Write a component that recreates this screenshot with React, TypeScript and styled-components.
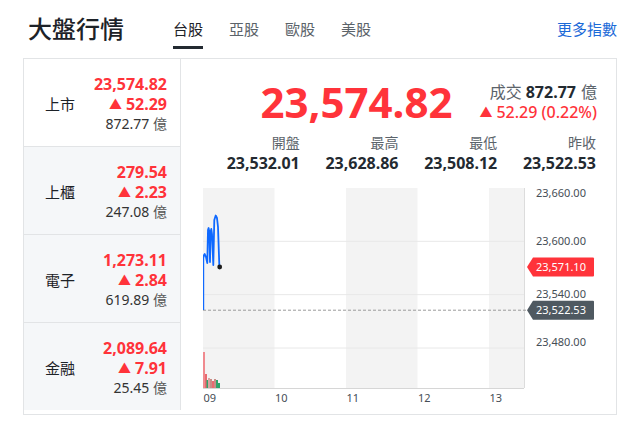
import { FC } from "react";
import styled, { createGlobalStyle } from "styled-components";

const GlobalStyle = createGlobalStyle`
  body {
    margin: 0;
    background: #fff;
    font-family: "Noto Sans", "Noto Sans CJK TC", sans-serif;
    color: #232a31;
  }
`;

const RED = "#ff333a";

interface IndexRow {
  name: string;
  value: string;
  change: string;
  volume: string;
}

const rows: IndexRow[] = [
  { name: "上市", value: "23,574.82", change: "52.29", volume: "872.77" },
  { name: "上櫃", value: "279.54", change: "2.23", volume: "247.08" },
  { name: "電子", value: "1,273.11", change: "2.84", volume: "619.89" },
  { name: "金融", value: "2,089.64", change: "7.91", volume: "25.45" },
];

const stats = [
  { label: "開盤", value: "23,532.01" },
  { label: "最高", value: "23,628.86" },
  { label: "最低", value: "23,508.12" },
  { label: "昨收", value: "23,522.53" },
];

const tabs = ["台股", "亞股", "歐股", "美股"];

// chart geometry (svg coords)
const PLOT_W = 321;
const PLOT_TOP = 8;
const PLOT_BOTTOM = 208;
const HOUR_W = 71.5;
const yOf = (v: number) => PLOT_TOP + (23660 - v) * (160 / 180);

const pricePoints: [number, number][] = [
  [0.3, 130],
  [0.3, 78],
  [1, 75],
  [1.7, 74],
  [3, 77],
  [4.3, 83],
  [5, 50],
  [5.6, 48],
  [6.3, 52],
  [7, 82],
  [7.6, 52],
  [8.3, 49],
  [9, 54],
  [10.3, 85],
  [11.3, 40],
  [12.7, 35.5],
  [14, 38],
  [15, 47],
  [16.3, 85],
  [16.7, 87],
];

const volumeBars = [
  { x: 0, h: 36, c: "#f08a8f" },
  { x: 2, h: 14, c: "#e86a70" },
  { x: 3.5, h: 8, c: "#2fa36b" },
  { x: 5, h: 10, c: "#d9a3a0" },
  { x: 7, h: 9, c: "#c98c86" },
  { x: 9, h: 7, c: "#e86a70" },
  { x: 11, h: 9, c: "#c98c86" },
  { x: 13, h: 8, c: "#2fa36b" },
  { x: 15, h: 5, c: "#2fa36b" },
];

const axisLabels = [
  { text: "23,660.00", y: 13 },
  { text: "23,600.00", y: 61 },
  { text: "23,540.00", y: 114 },
  { text: "23,480.00", y: 162 },
];

const Chart: FC = () => {
  const line = pricePoints.map(([x, y]) => `${x},${y}`).join(" ");
  const lastY = yOf(23571.1);
  const prevY = yOf(23522.53);
  return (
    <ChartSvg width="394" height="232" viewBox="0 0 394 232">
      {[0, 2, 4].map((i) => (
        <rect
          key={i}
          x={i * HOUR_W}
          y={PLOT_TOP}
          width={Math.min(HOUR_W, PLOT_W - i * HOUR_W)}
          height={PLOT_BOTTOM - PLOT_TOP}
          fill="#f3f3f3"
        />
      ))}
      {[23600, 23540, 23480].map((v) => (
        <line key={v} x1="0" x2={PLOT_W} y1={yOf(v)} y2={yOf(v)} stroke="#e8e8e8" />
      ))}
      <line x1={PLOT_W + 0.5} x2={PLOT_W + 0.5} y1={PLOT_TOP} y2={PLOT_BOTTOM} stroke="#dcdcdc" />
      <line x1="0" x2={PLOT_W} y1={PLOT_BOTTOM + 0.5} y2={PLOT_BOTTOM + 0.5} stroke="#d6d6d6" />
      <line
        x1="0"
        x2={PLOT_W + 4}
        y1={prevY}
        y2={prevY}
        stroke="#9a9a9a"
        strokeDasharray="3 2"
      />
      {volumeBars.map((b) => (
        <rect key={b.x} x={b.x} y={PLOT_BOTTOM - b.h} width="2" height={b.h} fill={b.c} />
      ))}
      <polyline points={line} fill="none" stroke="#0f69ff" strokeWidth="1.8" strokeLinejoin="round" />
      <circle cx="16.7" cy={lastY} r="2.4" fill="#1d1d1d" />

      {axisLabels.map((l) => (
        <AxisText key={l.text} x="333" y={l.y + 4}>
          {l.text}
        </AxisText>
      ))}
      {["09", "10", "11", "12", "13"].map((t, i) => (
        <AxisText key={t} x={i * HOUR_W + 0.5} y="222">
          {t}
        </AxisText>
      ))}

      <path
        d={`M324 ${lastY} l6 -9.5 h60 a1 1 0 0 1 1 1 v17 a1 1 0 0 1 -1 1 h-60 z`}
        fill={RED}
      />
      <TagText x="358" y={lastY + 4}>
        23,571.10
      </TagText>
      <path
        d={`M324 ${prevY} l6 -9.5 h60 a1 1 0 0 1 1 1 v17 a1 1 0 0 1 -1 1 h-60 z`}
        fill="#4f5961"
      />
      <TagText x="358" y={prevY + 4}>
        23,522.53
      </TagText>
    </ChartSvg>
  );
};

const App: FC = () => {
  return (
    <>
      <GlobalStyle />
      <Header>
        <Title>大盤行情</Title>
        <Tabs>
          {tabs.map((t, i) => (
            <Tab key={t} $active={i === 0}>
              {t}
            </Tab>
          ))}
        </Tabs>
        <MoreLink>更多指數</MoreLink>
      </Header>
      <Card>
        <SidePanel>
          {rows.map((r, i) => (
            <SideRow key={r.name} $selected={i === 0}>
              <RowName>{r.name}</RowName>
              <RowValues>
                <RowPrice>{r.value}</RowPrice>
                <RowChange>
                  <Arrow>▲</Arrow>
                  {r.change}
                </RowChange>
                <RowVolume>
                  {r.volume} <Unit>億</Unit>
                </RowVolume>
              </RowValues>
            </SideRow>
          ))}
        </SidePanel>
        <MainPanel>
          <PriceRow>
            <BigPrice>23,574.82</BigPrice>
            <PriceMeta>
              <MetaLine>
                <MetaLabel>成交</MetaLabel>
                <strong>872.77</strong>
                <MetaLabel>億</MetaLabel>
              </MetaLine>
              <MetaChange>
                <Arrow>▲</Arrow>
                52.29 (0.22%)
              </MetaChange>
            </PriceMeta>
          </PriceRow>
          <StatsGrid>
            {stats.map((s) => (
              <Stat key={s.label}>
                <StatLabel>{s.label}</StatLabel>
                <StatValue>{s.value}</StatValue>
              </Stat>
            ))}
          </StatsGrid>
          <Chart />
        </MainPanel>
      </Card>
    </>
  );
};

export default App;

const Header = styled.div`
  display: flex;
  align-items: flex-start;
  height: 58px;
  padding: 14px 15px 0 28px;
  box-sizing: border-box;
`;

const Title = styled.h1`
  margin: 0;
  font-size: 24px;
  line-height: 30px;
  font-weight: 500;
  color: #1d2228;
`;

const Tabs = styled.div`
  display: flex;
  gap: 26px;
  margin-left: 49px;
`;

interface TabProps {
  $active?: boolean;
}
const Tab = styled.div<TabProps>`
  font-size: 15px;
  line-height: 22px;
  padding: 4px 0 6px;
  color: ${(p) => (p.$active ? "#1d2228" : "#5b636a")};
  border-bottom: 3px solid ${(p) => (p.$active ? "#232a31" : "transparent")};
`;

const MoreLink = styled.a`
  margin-left: auto;
  font-size: 15px;
  line-height: 22px;
  padding-top: 4px;
  color: #1b6ad8;
  cursor: pointer;
`;

const Card = styled.div`
  display: flex;
  margin: 0 15px 0 23px;
  height: 357px;
  border: 1px solid #e2e4e6;
  box-sizing: border-box;
`;

const SidePanel = styled.div`
  width: 159px;
  border-right: 1px solid #e2e4e6;
  display: flex;
  flex-direction: column;
  align-self: flex-start;
`;

interface SideRowProps {
  $selected?: boolean;
}
const SideRow = styled.div<SideRowProps>`
  height: 88px;
  box-sizing: border-box;
  display: flex;
  align-items: center;
  justify-content: space-between;
  padding: 2px 13px 0 21px;
  background: ${(p) => (p.$selected ? "#fff" : "#f5f7f9")};
  border-bottom: 1px solid #e2e4e6;

  &:last-child {
    height: 87px;
    border-bottom: none;
  }
`;

const RowName = styled.div`
  font-size: 15px;
  color: #1d2228;
`;

const RowValues = styled.div`
  display: flex;
  flex-direction: column;
  align-items: flex-end;
`;

const RowPrice = styled.div`
  height: 20px;
  line-height: 20px;
  font-size: 16px;
  font-weight: 700;
  color: ${RED};
  white-space: nowrap;
`;

const RowChange = styled(RowPrice)``;

const Arrow = styled.span`
  font-size: 13px;
  margin-right: 4px;
  vertical-align: top;
`;

const RowVolume = styled.div`
  height: 20px;
  line-height: 20px;
  font-size: 14px;
  color: #333;
  white-space: nowrap;
`;

const Unit = styled.span`
  color: #555;
  vertical-align: top;
`;

const MainPanel = styled.div`
  flex: 1;
  display: flex;
  flex-direction: column;
  padding: 0 19px 0 20px;
`;

const PriceRow = styled.div`
  display: flex;
  justify-content: flex-end;
  align-items: center;
  gap: 27px;
  height: 50px;
  margin-top: 18px;
`;

const BigPrice = styled.div`
  font-size: 42px;
  font-weight: 700;
  color: ${RED};
  line-height: 50px;
`;

const PriceMeta = styled.div`
  display: flex;
  flex-direction: column;
  align-items: flex-end;
  line-height: 20px;
  font-size: 16px;
`;

const MetaLine = styled.div`
  color: #232a31;

  strong {
    font-weight: 700;
    margin: 0 5px 0 4px;
  }
`;

const MetaLabel = styled.span`
  color: #5b636a;
`;

const MetaChange = styled.div`
  color: ${RED};
  font-weight: 500;
`;

const StatsGrid = styled.div`
  display: grid;
  grid-template-columns: repeat(4, 1fr);
  margin-top: 6px;
  padding-right: 1px;
`;

const Stat = styled.div`
  display: flex;
  flex-direction: column;
  align-items: flex-end;
  line-height: 20px;
`;

const StatLabel = styled.div`
  font-size: 14px;
  color: #5b636a;
`;

const StatValue = styled.div`
  font-size: 16px;
  font-weight: 700;
  color: #232a31;
`;

const ChartSvg = styled.svg`
  display: block;
  margin-top: 7px;
  margin-left: 2px;
`;

const AxisText = styled.text`
  font-family: "Noto Sans", sans-serif;
  font-size: 11px;
  fill: #464e56;
`;

const TagText = styled.text`
  font-family: "Noto Sans", sans-serif;
  font-size: 11px;
  fill: #fff;
  text-anchor: middle;
`;
